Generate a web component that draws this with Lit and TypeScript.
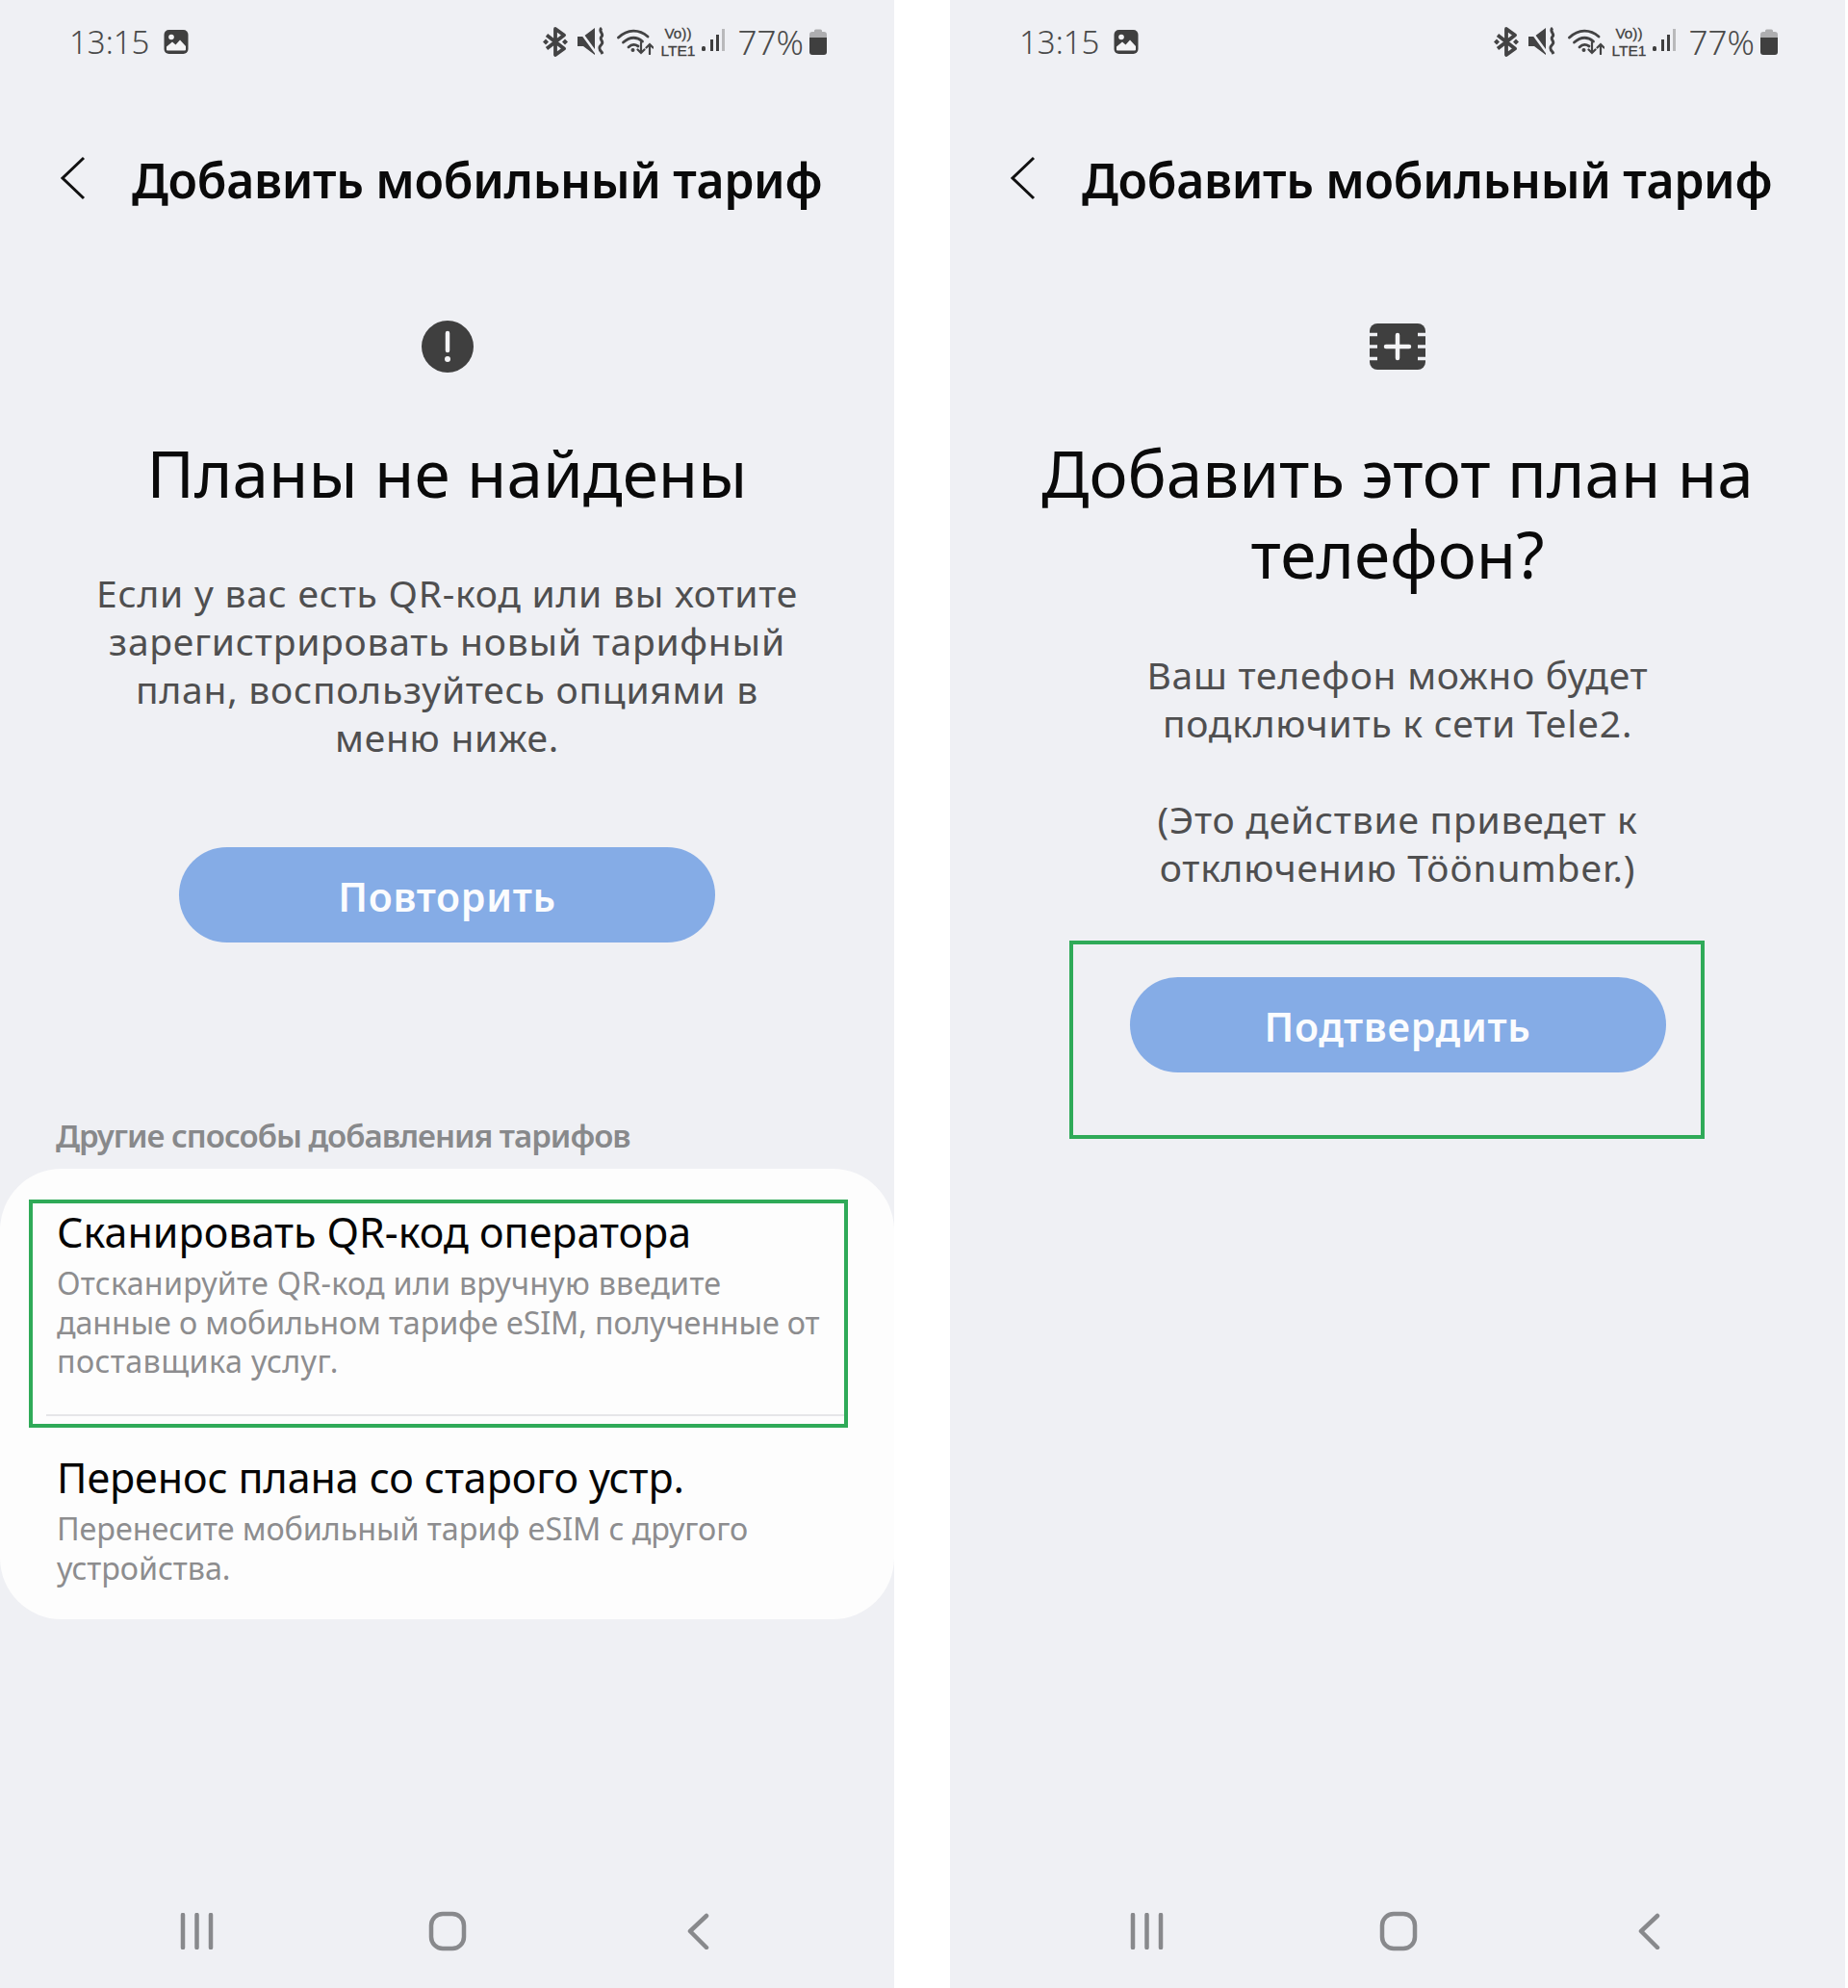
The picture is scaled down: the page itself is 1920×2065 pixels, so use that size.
import { LitElement, html, css } from "lit";
import { customElement } from "lit/decorators.js";

const nav = html`
  <div class="nav">
    <svg width="38" height="38" viewBox="0 0 38 38" class="navicon"><path d="M4 2v34M18.500 2v34M33 2v34" /></svg>
    <svg width="40" height="42" viewBox="0 0 40 42" class="navicon"><rect x="3" y="3" width="34" height="36" rx="12" /></svg>
    <svg width="38" height="38" viewBox="0 0 38 38" class="navicon nb"><path d="M27 3 10 19l17 17" /></svg>
  </div>`;

const status = html`
  <div class="status">
    <span class="time">13:15</span>
    <svg class="pic" width="26" height="25" viewBox="0 0 26 25">
      <rect x="0.500" y="0" width="25" height="25" rx="5" fill="#3f3f3f" />
      <circle cx="8" cy="7.500" r="2.800" fill="#f4f4f6" />
      <path d="M3 20.500v-3l6-5 3.500 3 4.500-5 6 6.500v3.500a1 1 0 0 1-1 1H4a1 1 0 0 1-1-1z" fill="#f4f4f6" />
    </svg>
    <span class="spacer"></span>
    <svg class="ico" width="26" height="31" viewBox="0 0 26 31" fill="none" stroke="#434344" stroke-width="3.800" stroke-linejoin="round">
      <path d="M4 8.500l18 14-9 6.500V2l9 6.500L4 22.500" />
      <path d="M0 15.500l3-3 3 3-3 3zM20 15.500l3-3 3 3-3 3z" fill="#434344" stroke="none" />
    </svg>
    <svg class="ico mute" width="29" height="30" viewBox="0 0 29 30">
      <path d="M0 10h6L18 1v28L6 20H0z" fill="#434344" />
      <path d="M25 1c-4 3.500 3 6 0 9s3 5 0 8-3 5 0 8l1 2" fill="none" stroke="#434344" stroke-width="3" />
      <path d="M1 2l19 26" stroke="#eff0f4" stroke-width="2.600" />
    </svg>
    <svg class="ico wifi" width="38" height="28" viewBox="0 0 38 28" fill="none" stroke="#434344" stroke-width="2.800" stroke-linecap="round">
      <path d="M1.500 10C11 1 23 1 32 9" /><path d="M6.500 15c7-6 14-6 20-1" /><path d="M12 20c3-3 7-3 10-1" />
      <circle cx="16.500" cy="23" r="2" fill="#434344" stroke="none" />
      <path d="M25 15v11M21.500 22.500 25 26l3.500-3.500M34 27V17M30.500 20.500 34 17l3.500 3.500" stroke-width="2.200" />
    </svg>
    <svg class="ico volte" width="37" height="44" viewBox="0 0 37 44">
      <text x="4.500" y="19" class="vt" textLength="28" lengthAdjust="spacingAndGlyphs">Vo))</text>
      <text x="0.500" y="37" class="vt" textLength="36" lengthAdjust="spacingAndGlyphs">LTE1</text>
    </svg>
    <svg class="ico signal" width="24" height="28" viewBox="0 0 24 28">
      <rect x="0" y="19" width="4" height="5" rx="1.500" fill="#3f3f3f" />
      <rect x="9" y="12" width="3" height="12" fill="#3f3f3f" />
      <rect x="15" y="7" width="3" height="17" fill="#3f3f3f" />
      <rect x="21" y="1" width="3" height="23" fill="#b9b9bb" />
    </svg>
    <span class="pct">77%</span>
    <svg class="ico" width="18" height="28" viewBox="0 0 18 28">
      <path d="M5 3a1.500 1.500 0 0 1 1.500-1.500h5A1.500 1.500 0 0 1 13 3v1h2a3 3 0 0 1 3 3v4H0V7a3 3 0 0 1 3-3h2z" fill="#aeaeb0" />
      <path d="M0 10h18v15a3 3 0 0 1-3 3H3a3 3 0 0 1-3-3z" fill="#3f3f3f" />
    </svg>
  </div>`;

const appbar = html`
  <div class="appbar">
    <svg width="27" height="46" viewBox="0 0 27 46" fill="none" stroke="#111" stroke-width="3" class="back"><path d="M25 2 3 23l22 21" /></svg>
    <span class="title">Добавить мобильный тариф</span>
  </div>`;

@customElement("app-root")
export class AppRoot extends LitElement {
  static styles = css`
    :host { display: flex; width: 1920px; height: 2065px; background: #fff; font-family: "Noto Sans", sans-serif; color: #000; }
    .phone { position: relative; width: 929px; height: 2065px; background: #eff0f4; display: flex; flex-direction: column; flex: none; }
    .right { margin-left: 58px; width: 930px; }
    .status { display: flex; align-items: center; height: 86px; padding: 0 70px 0 72px; color: #4a4a4a; }
    .time { font-size: 33px; font-weight: 300; width: 98px; }
    .spacer { flex: 1; }
    .mute { margin-left: 10px; }
    .wifi { margin-left: 12px; }
    .volte { margin-left: 7px; }
    .vt { font-family: "Liberation Sans", sans-serif; font-size: 15.500px; fill: #3f3f3f; stroke: #3f3f3f; stroke-width: 0.3px; }
    .signal { margin-left: 6px; }
    .pct { font-size: 35px; font-weight: 300; margin-left: 14px; margin-right: 6px; }
    .appbar { display: flex; align-items: center; height: 204px; padding-left: 62px; }
    .back { flex: none; position: relative; top: -3px; }
    .title { font-size: 50px; font-weight: 600; margin-left: 48px; letter-spacing: -0.33px; white-space: nowrap; color: #0a0a0a; line-height: 68px; position: relative; top: -1px; }
    .center { display: flex; flex-direction: column; align-items: center; text-align: center; }
    .iconrow { height: 54px; margin-top: 43px; display: flex; align-items: center; justify-content: center; }
    h1 { margin: 62px 0 0; font-size: 67.400px; font-weight: 400; line-height: 84px; color: #0a0a0a; width: 840px; }
    .body { margin: 58px 0 0; font-size: 39px; line-height: 50px; color: #4f4f50; width: 800px; letter-spacing: 0.75px; }
    .body.two { margin-top: 59px; }
    .btn { width: 557px; height: 99px; border-radius: 50px; background: #85ace6; color: #fbfcfe; font-size: 41px; font-weight: 600; letter-spacing: 0.7px; display: flex; align-items: center; justify-content: center; margin-top: 89px; padding-top: 3px; box-sizing: border-box; }
    .label { margin: 179px 0 0 58px; font-size: 33px; font-weight: 600; line-height: 44px; color: #88898b; letter-spacing: -1px; }
    .card { margin-top: 12px; background: #fdfdfd; border-radius: 64px; height: 468px; box-sizing: border-box; padding: 38px 0 32px; }
    .item { padding: 0 0 0 59px; }
    .item.first { padding-bottom: 35px; }
    .item.second { padding-top: 36px; }
    .t { font-size: 43px; line-height: 56px; color: #050505; }
    .second .t { letter-spacing: -0.1px; }
    .s { margin-top: 4px; font-size: 32.300px; line-height: 40.700px; color: #8d8d8f; width: 860px; }
    .second .s { letter-spacing: -0.06px; }
    .wide { letter-spacing: 0.24px; }
    .narrow { letter-spacing: -0.14px; }
    .wider { letter-spacing: 0.39px; }
    .divider { height: 2px; background: #e6e6e8; margin: 0 52px 0 48px; }
    .nav { margin-top: auto; height: 118px; display: flex; align-items: center; justify-content: space-between; padding: 0 185px 0 186px; box-sizing: border-box; }
    .navicon { fill: none; stroke: #88898c; stroke-width: 4.500; stroke-linecap: round; stroke-linejoin: round; }
    .nb { position: relative; left: 1px; }
    .mark { position: absolute; border: 4px solid #2faa58; box-sizing: border-box; pointer-events: none; }
    .m1 { left: 30px; top: 1246px; width: 851px; height: 237px; }
    .m2 { left: 124px; top: 977px; width: 660px; height: 206px; }
  `;

  render() {
    return html`
      <div class="phone">
        ${status}${appbar}
        <div class="center">
          <div class="iconrow">
            <svg width="54" height="54" viewBox="0 0 54 54">
              <circle cx="27" cy="27" r="27" fill="#3f3f3f" />
              <path d="M27 13v18" stroke="#f4f4f6" stroke-width="4.500" stroke-linecap="round" />
              <circle cx="27" cy="40" r="3" fill="#f4f4f6" />
            </svg>
          </div>
          <h1>Планы не найдены</h1>
          <div class="body">Если у вас есть QR-код или вы хотите<br />зарегистрировать новый тарифный<br />план, воспользуйтесь опциями в<br />меню ниже.</div>
          <div class="btn">Повторить</div>
        </div>
        <div class="label">Другие способы добавления тарифов</div>
        <div class="card">
          <div class="item first">
            <div class="t">Сканировать QR-код оператора</div>
            <div class="s"><span class="wide">Отсканируйте QR-код или вручную введите</span><br /><span class="narrow">данные о мобильном тарифе eSIM, полученные от</span><br /><span class="wider">поставщика услуг.</span></div>
          </div>
          <div class="divider"></div>
          <div class="item second">
            <div class="t">Перенос плана со старого устр.</div>
            <div class="s">Перенесите мобильный тариф eSIM с другого<br />устройства.</div>
          </div>
        </div>
        ${nav}
        <div class="mark m1"></div>
      </div>
      <div class="phone right">
        ${status}${appbar}
        <div class="center">
          <div class="iconrow">
            <svg width="58" height="48" viewBox="0 0 58 48">
              <rect x="0" y="0" width="58" height="48" rx="8" fill="#3f3f3f" />
              <path d="M0 11.500h8M0 24h8M0 36.500h8M50 11.500h8M50 24h8M50 36.500h8" stroke="#eff0f4" stroke-width="3.500" />
              <path d="M29 12v24M17 24h24" stroke="#f4f4f6" stroke-width="4.500" stroke-linecap="round" />
            </svg>
          </div>
          <h1>Добавить этот план на<br />телефон?</h1>
          <div class="body two">Ваш телефон можно будет<br />подключить к сети Tele2.<br /><br />(Это действие приведет к<br />отключению Töönumber.)</div>
          <div class="btn">Подтвердить</div>
        </div>
        ${nav}
        <div class="mark m2"></div>
      </div>
    `;
  }
}
